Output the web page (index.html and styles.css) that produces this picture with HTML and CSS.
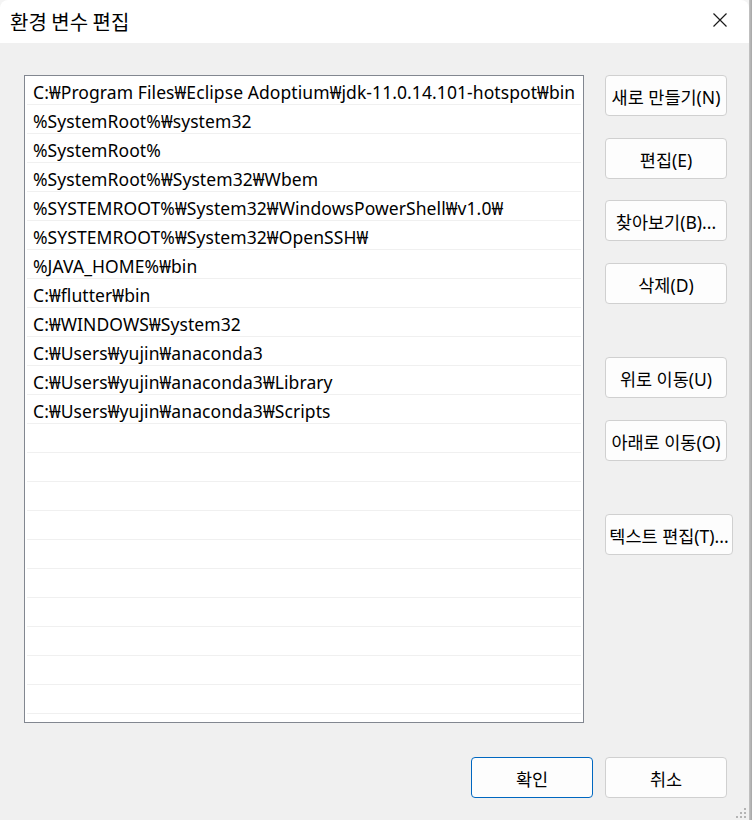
FILE: index.html
```html
<!DOCTYPE html>
<html>
<head>
    <title>환경 변수 편집</title>
    <link rel="stylesheet" href="styles.css">
</head>
<body>
    <div class="window">
        <div class="titlebar">
            <span class="title">환경 변수 편집</span>
            <svg class="close" width="16" height="16" viewBox="0 0 16 16">
                <path d="M1.5 1.5 L14.5 14.5 M14.5 1.5 L1.5 14.5" stroke="#1a1a1a" stroke-width="1.2" fill="none"/>
            </svg>
        </div>

        <div class="content">
            <div class="list">
                <div class="row">C:₩Program Files₩Eclipse Adoptium₩jdk-11.0.14.101-hotspot₩bin</div>
                <div class="row">%SystemRoot%₩system32</div>
                <div class="row">%SystemRoot%</div>
                <div class="row">%SystemRoot%₩System32₩Wbem</div>
                <div class="row">%SYSTEMROOT%₩System32₩WindowsPowerShell₩v1.0₩</div>
                <div class="row">%SYSTEMROOT%₩System32₩OpenSSH₩</div>
                <div class="row">%JAVA_HOME%₩bin</div>
                <div class="row">C:₩flutter₩bin</div>
                <div class="row">C:₩WINDOWS₩System32</div>
                <div class="row">C:₩Users₩yujin₩anaconda3</div>
                <div class="row">C:₩Users₩yujin₩anaconda3₩Library</div>
                <div class="row">C:₩Users₩yujin₩anaconda3₩Scripts</div>
                <div class="row"></div>
                <div class="row"></div>
                <div class="row"></div>
                <div class="row"></div>
                <div class="row"></div>
                <div class="row"></div>
                <div class="row"></div>
                <div class="row"></div>
                <div class="row"></div>
                <div class="row"></div>
            </div>

            <div class="side">
                <button class="btn">새로 만들기(N)</button>
                <button class="btn">편집(E)</button>
                <button class="btn">찾아보기(B)...</button>
                <button class="btn">삭제(D)</button>
                <button class="btn spaced">위로 이동(U)</button>
                <button class="btn">아래로 이동(O)</button>
                <button class="btn spaced wide">텍스트 편집(T)...</button>
            </div>
        </div>

        <div class="footer">
            <button class="btn default">확인</button>
            <button class="btn">취소</button>
        </div>

        <svg class="grip" width="12" height="12" viewBox="0 0 12 12">
            <rect x="8" y="0" width="2" height="2" fill="#b4b4b4"/>
            <rect x="4" y="4" width="2" height="2" fill="#b4b4b4"/>
            <rect x="8" y="4" width="2" height="2" fill="#b4b4b4"/>
            <rect x="0" y="8" width="2" height="2" fill="#b4b4b4"/>
            <rect x="4" y="8" width="2" height="2" fill="#b4b4b4"/>
            <rect x="8" y="8" width="2" height="2" fill="#b4b4b4"/>
        </svg>
    </div>
</body>
</html>
```

FILE: styles.css
```css
html, body {
    margin: 0;
    padding: 0;
    height: 100%;
    overflow: hidden;
}

body {
    font-family: "Noto Sans", "Noto Sans CJK KR", sans-serif;
    background: linear-gradient(to right, #f4f4f4 749px, #c4c4c4 749px, #a6a6a6 752px);
    color: #000000;
}

.window {
    position: relative;
    width: 749px;
    height: 820px;
    background-color: #f0f0f0;
    border-radius: 8px 8px 0 0;
    overflow: hidden;
}

.titlebar {
    height: 43px;
    background-color: #ffffff;
    display: flex;
    align-items: center;
    justify-content: space-between;
    padding: 0 21px 0 10px;
}

.title {
    font-family: "Noto Sans CJK KR", sans-serif;
    font-size: 20px;
    margin-top: -1px;
}

.close {
    display: block;
    margin-top: -3px;
}

.content {
    display: flex;
    padding: 32px 0 0 24px;
    gap: 21px;
}

.list {
    width: 558px;
    height: 646px;
    background-color: #ffffff;
    border: 1px solid #828790;
    overflow: hidden;
}

.row {
    height: 24px;
    line-height: 24px;
    margin: 0 2px;
    padding: 4px 0 0 6px;
    border-bottom: 1px solid #f0f0f0;
    font-size: 17.5px;
    letter-spacing: 0.08px;
    white-space: nowrap;
}

.side {
    display: flex;
    flex-direction: column;
    align-items: flex-start;
    gap: 21.5px;
}

.btn {
    width: 122px;
    height: 41px;
    padding: 2px 0 0 0;
    background-color: #fdfdfd;
    border: 1px solid #d0d0d0;
    border-radius: 4px;
    font-family: "Noto Sans", "Noto Sans CJK KR", sans-serif;
    font-size: 17.5px;
    color: #000000;
    white-space: nowrap;
    display: flex;
    align-items: center;
    justify-content: center;
    overflow: visible;
}

.btn.spaced {
    margin-top: 32px;
}

.btn.wide {
    width: 128px;
}

.footer {
    display: flex;
    justify-content: flex-end;
    gap: 12px;
    padding: 34px 22px 0 0;
}

.btn.default {
    border-color: #0067c0;
}

.grip {
    position: absolute;
    right: 1px;
    bottom: 0;
}
```
